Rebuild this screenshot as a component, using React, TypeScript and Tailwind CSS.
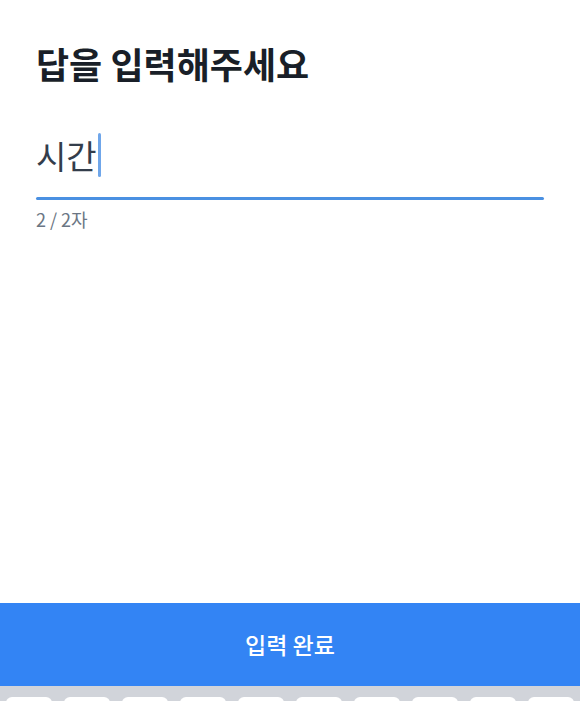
const font = { fontFamily: '"Noto Sans CJK KR", "Noto Sans", sans-serif' };

export default function App() {
  return (
    <div className="w-[580px] h-[701px] bg-white flex flex-col overflow-hidden" style={font}>
      {/* Content */}
      <div className="flex-1 px-9 pt-[39px]">
        <h1 className="text-[36px] font-bold leading-[48px] text-[#191f28]">
          답을 입력해주세요
        </h1>

        <div className="mt-[44px] flex items-center h-[48px]">
          <span className="text-[33px] leading-[48px] text-[#333d4b]">시간</span>
          <span className="ml-[1px] w-[3px] h-[44px] rounded-full bg-[#6fa6ea]" />
        </div>
        <div className="mt-[18px] h-[3px] rounded-full bg-[#4a90e2]" />
        <p className="mt-[7px] text-[18px] leading-[24px] text-[#6b7684]">2 / 2자</p>
      </div>

      {/* Submit */}
      <button className="h-[83px] w-full bg-[#3384f4] text-white text-[23px] font-medium">
        입력 완료
      </button>

      {/* Keyboard top */}
      <div className="h-[15px] bg-[#d1d4da] flex gap-[12px] px-[6px] pt-[11px]">
        {Array.from({ length: 10 }).map((_, i) => (
          <div key={i} className="flex-1 h-[10px] bg-white rounded-t-[6px]" />
        ))}
      </div>
    </div>
  );
}
